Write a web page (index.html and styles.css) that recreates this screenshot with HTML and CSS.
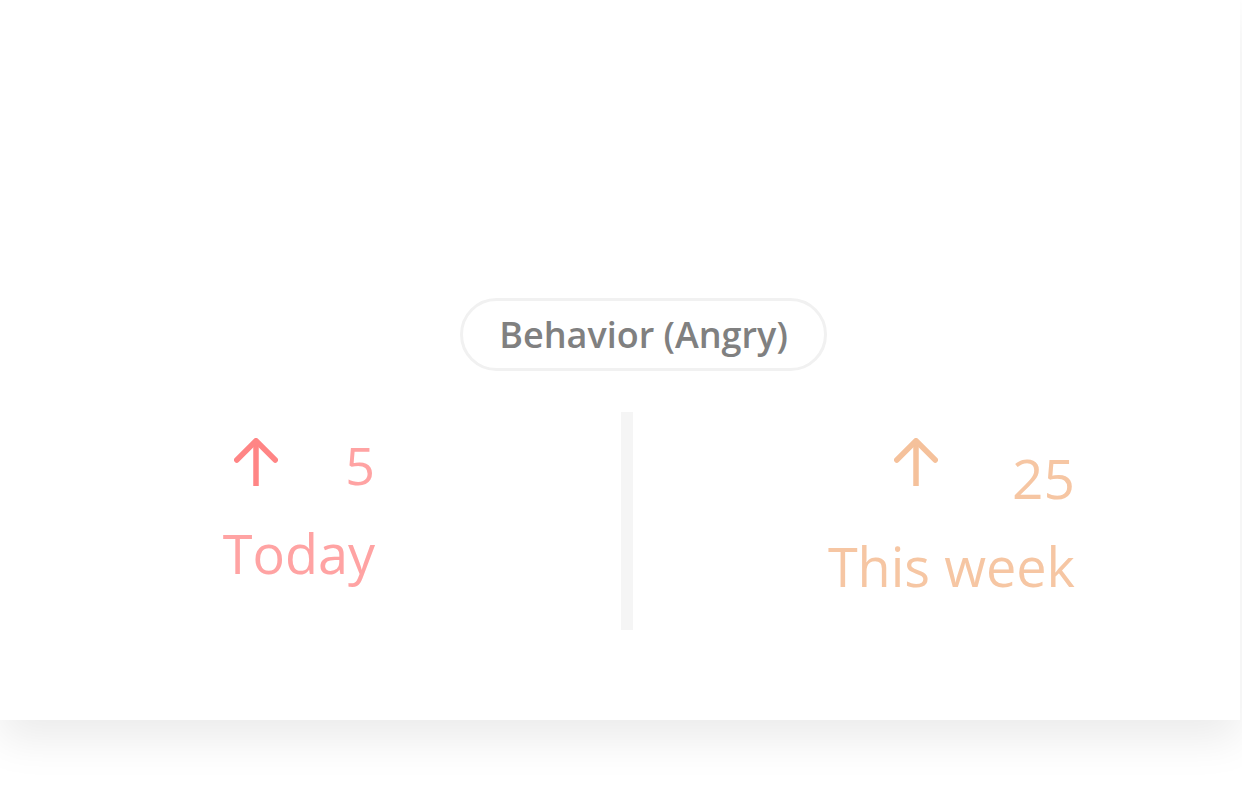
FILE: index.html
```html
<!DOCTYPE html>
<html lang="en">
<head>
<meta charset="utf-8">
<title>Behavior (Angry)</title>
<link rel="stylesheet" href="styles.css">
</head>
<body>
<div class="card">
  <div class="pill-row">
    <div class="pill">Behavior (Angry)</div>
  </div>
  <div class="stats">
    <div class="stat stat-today">
      <div class="stat-inner">
        <div class="stat-top">
          <svg class="arrow" width="44" height="48" viewBox="0 0 44 48" aria-hidden="true">
            <line x1="22" y1="4" x2="22" y2="48" stroke="currentColor" stroke-width="5.5" stroke-linecap="butt"/>
            <polyline points="2.75,22 22,2.75 41.25,22" fill="none" stroke="currentColor" stroke-width="5.5" stroke-linecap="round" stroke-linejoin="round"/>
          </svg>
          <span class="num">5</span>
        </div>
        <div class="label">Today</div>
      </div>
    </div>
    <div class="divider"></div>
    <div class="stat stat-week">
      <div class="stat-inner">
        <div class="stat-top">
          <svg class="arrow" width="44" height="48" viewBox="0 0 44 48" aria-hidden="true">
            <line x1="22" y1="4" x2="22" y2="48" stroke="currentColor" stroke-width="5.5" stroke-linecap="butt"/>
            <polyline points="2.75,22 22,2.75 41.25,22" fill="none" stroke="currentColor" stroke-width="5.5" stroke-linecap="round" stroke-linejoin="round"/>
          </svg>
          <span class="num">25</span>
        </div>
        <div class="label">This week</div>
      </div>
    </div>
  </div>
</div>
</body>
</html>
```

FILE: styles.css
```css
html, body {
  margin: 0;
  padding: 0;
  background: #ffffff;
  font-family: "Open Sans", "Noto Sans", sans-serif;
}

body {
  min-height: 792px;
  padding-bottom: 72px;
  box-sizing: border-box;
  overflow: hidden;
}

.card {
  width: 1240px;
  height: 720px;
  box-sizing: border-box;
  background: #ffffff;
  padding-top: 298px;
  box-shadow: 0 20px 40px rgba(0, 0, 0, 0.08);
}

.pill-row {
  display: flex;
  padding-left: 460px;
}

.pill {
  display: flex;
  align-items: center;
  justify-content: center;
  box-sizing: border-box;
  width: 367px;
  height: 73px;
  border: 3px solid #f1f1f1;
  border-radius: 37px;
  font-size: 36px;
  font-weight: 600;
  line-height: 1;
  color: #808080;
}

.stats {
  display: flex;
  height: 218px;
  margin-top: 41px;
}

.stat {
  display: flex;
  justify-content: flex-end;
  padding-top: 26px;
  box-sizing: border-box;
}

.stat-today {
  width: 621px;
  padding-right: 246px;
  color: #ffa3a3;
}

.stat-week {
  flex: 1;
  padding-right: 165px;
  color: #f6c6a3;
}

.divider {
  width: 12px;
  background: #f5f5f5;
}

.stat-inner {
  display: flex;
  flex-direction: column;
}

.stat-top {
  display: flex;
  justify-content: space-between;
  align-items: flex-start;
}

.arrow {
  display: block;
  flex: none;
}

.stat-today .arrow {
  color: #ff8585;
  margin-left: 11px;
}

.stat-week .arrow {
  color: #f5c19b;
  margin-left: 66px;
}

.num {
  line-height: 1;
}

.stat-today .num {
  font-size: 52px;
  margin-top: 1px;
}

.stat-week .num {
  font-size: 55px;
  margin-top: 12px;
}

.label {
  font-size: 54px;
  line-height: 1;
  white-space: nowrap;
}

.stat-today .label {
  margin-top: 35px;
}

.stat-week .label {
  margin-top: 34px;
}
```
